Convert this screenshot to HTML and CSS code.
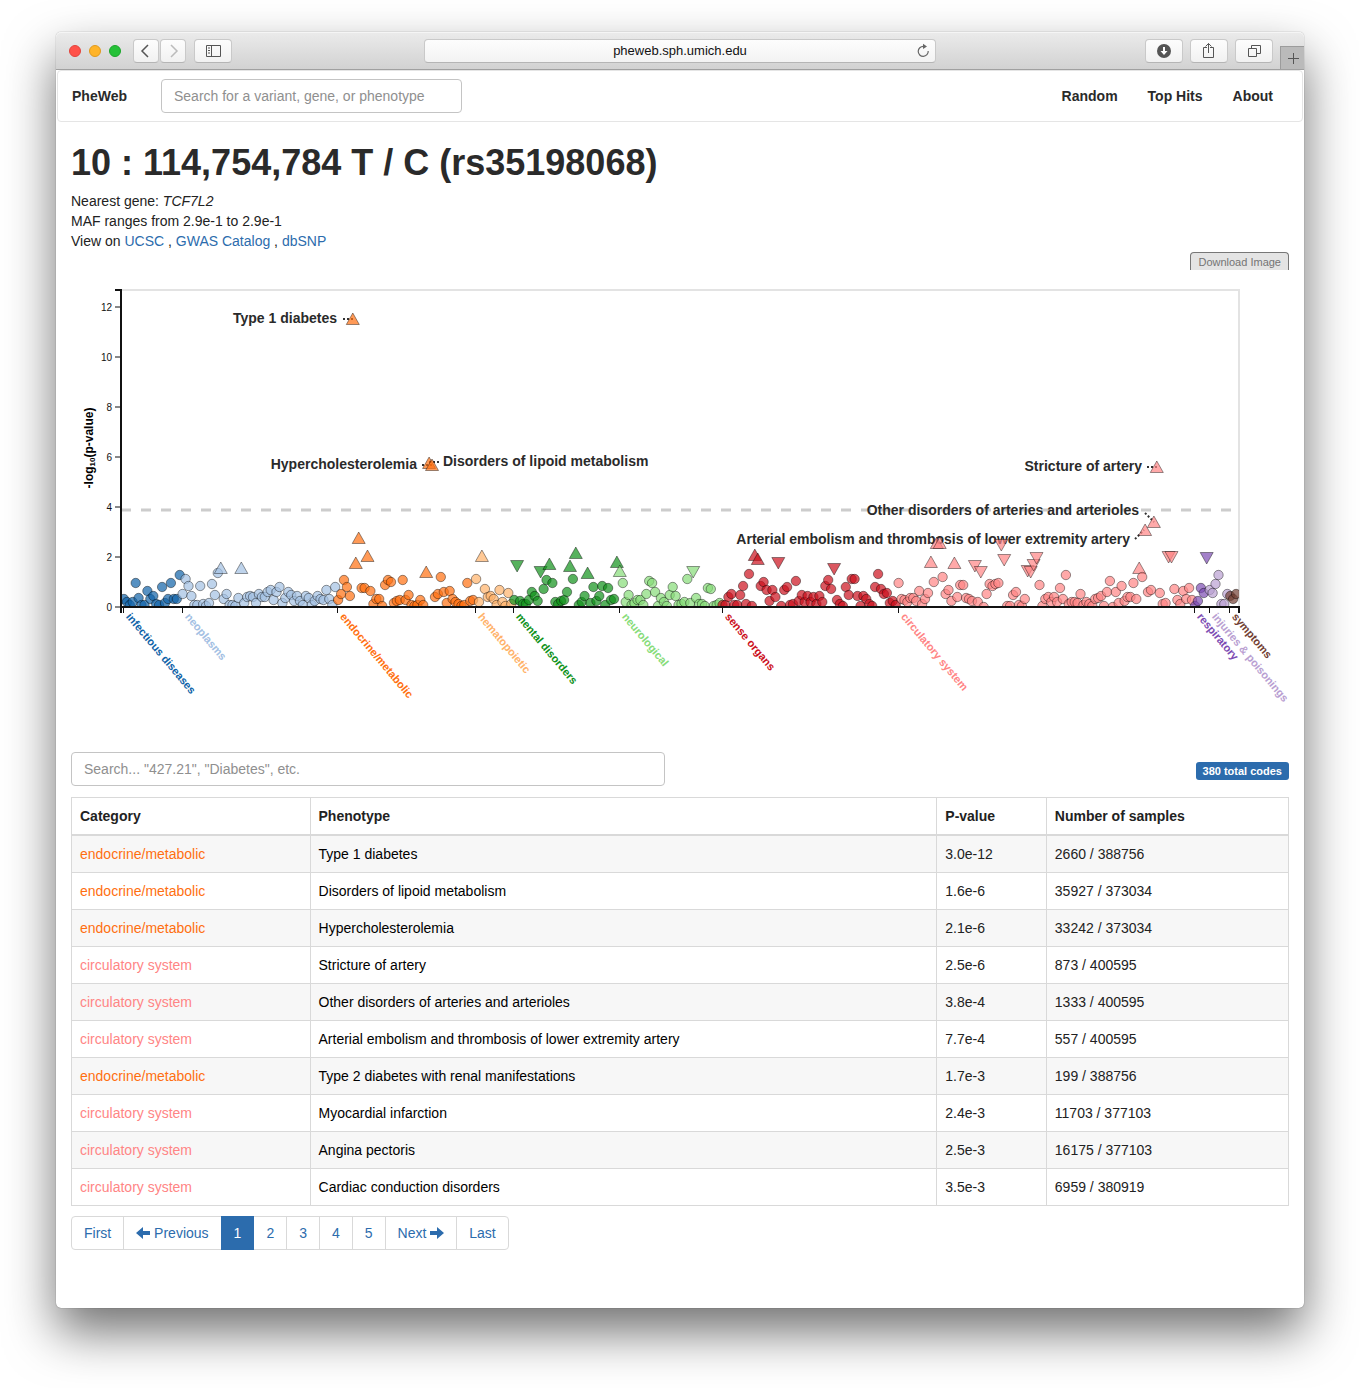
FILE: index.html
```html
<!DOCTYPE html>
<html lang="en">
<head>
<meta charset="utf-8">
<title>PheWeb</title>
<link rel="stylesheet" href="styles.css">
</head>
<body>
<div class="window">
  <header class="toolbar">
    <div class="toolbar-left">
      <div class="lights"><span class="light red"></span><span class="light amber"></span><span class="light green"></span></div>
      <div class="pair">
        <button class="tool small" aria-label="Back"><svg width="24" height="22"><path d="M14 5L8 11l6 6" stroke="#555" stroke-width="1.5"/></svg></button>
        <button class="tool small" aria-label="Forward"><svg width="24" height="22"><path d="M10 5l6 6-6 6" stroke="#bbb" stroke-width="1.5"/></svg></button>
      </div>
      <button class="tool" aria-label="Show sidebar"><svg width="36" height="22"><path d="M11.500 5.500h14v11h-14zM16.500 5.500v11M13 8h2M13 10.500h2M13 13h2" stroke="#555"/></svg></button>
    </div>
    <div class="address">
      <input type="text" aria-label="Address" value="pheweb.sph.umich.edu">
      <button aria-label="Reload"><svg width="14" height="16"><path d="M7.500 3.400A5 5 0 1 0 12.200 8" stroke="#666" stroke-width="1.200"/><path d="M7 .8l4 2.600-4 2.600z" fill="#666"/></svg></button>
    </div>
    <div class="toolbar-right">
      <button class="tool" aria-label="Downloads"><svg width="36" height="22"><circle cx="18" cy="11" r="7" fill="#555"/><path d="M17 7h2v4h2.500L18 15l-3.500-4H17z" fill="#fff"/></svg></button>
      <button class="tool" aria-label="Share"><svg width="36" height="22"><path d="M16 7.500h-3.500v10h10v-10H19M17.500 13V3.500M14.500 6.500l3-3 3 3" stroke="#555"/></svg></button>
      <button class="tool" aria-label="Show all tabs"><svg width="36" height="22"><path d="M12.500 8.500h8v8h-8zM15.500 8V5.500h9v8H21" stroke="#555"/></svg></button>
      <button class="new-tab" aria-label="New tab"><svg width="22" height="22"><path d="M11.500 6v11M6 11.500h11" stroke="#555"/></svg></button>
    </div>
  </header>

  <nav class="navbar">
    <a class="brand" href="#">PheWeb</a>
    <input class="field nav-search" type="text" aria-label="Search" placeholder="Search for a variant, gene, or phenotype">
    <div class="nav-links"><a href="#">Random</a><a href="#">Top Hits</a><a href="#">About</a></div>
  </nav>

  <main class="content">
    <h1>10 : 114,754,784 T / C (rs35198068)</h1>
    <p>Nearest gene: <i>TCF7L2</i></p>
    <p>MAF ranges from 2.9e-1 to 2.9e-1</p>
    <p>View on <a href="#">UCSC</a> , <a href="#">GWAS Catalog</a> , <a href="#">dbSNP</a></p>
    <div class="download-row"><button class="download">Download Image</button></div>

    <svg class="chart" viewBox="0 0 1218 480" role="img" aria-label="p-values by phenotype category">
      <defs><clipPath id="plot-area"><rect width="1118" height="317"/></clipPath></defs>
      <g transform="translate(50 20)">
        <path class="frame" d="M0 0H1118V317"/>
        <path class="threshold" d="M0 220H1118"/>
        <g class="hits">
          <g text-anchor="end">
            <text x="216" y="33">Type 1 diabetes</text>
            <text x="296" y="179">Hypercholesterolemia</text>
            <text x="1021" y="181">Stricture of artery</text>
            <text x="1018" y="225">Other disorders of arteries and arterioles</text>
            <text x="1009" y="254">Arterial embolism and thrombosis of lower extremity artery</text>
          </g>
          <text x="322" y="176">Disorders of lipoid metabolism</text>
          <path d="M222 29h10M301 175h10M308 172h10M1026 177h10M1024 223l9 9M1014 249l9-9"/>
        </g>
        <g id="points" class="points" clip-path="url(#plot-area)"></g>
        <path class="axis" d="M-6 0H0V323M-1 317H1118V323"/>
        <path class="ticks" d="M-6 17H0M-6 67H0M-6 117H0M-6 167H0M-6 217H0M-6 267H0M-6 317H0"/>
        <g class="tick-text" text-anchor="end">
          <text x="-9" y="21">12</text><text x="-9" y="71">10</text><text x="-9" y="121">8</text><text x="-9" y="171">6</text><text x="-9" y="221">4</text><text x="-9" y="271">2</text><text x="-9" y="321">0</text>
        </g>
        <text class="axis-title" text-anchor="middle" transform="translate(-28 158) rotate(-90)">-log<tspan class="sub" dy="2">10</tspan><tspan dy="-2">(p-value)</tspan></text>
        <g id="categories" class="categories"></g>
      </g>
    </svg>

    <div class="filter-row">
      <input class="field filter" type="text" aria-label="Filter phenotypes" placeholder='Search... "427.21", "Diabetes", etc.'>
      <span class="badge">380 total codes</span>
    </div>

    <table>
      <colgroup><col class="c-category"><col class="c-phenotype"><col class="c-pvalue"><col class="c-samples"></colgroup>
      <thead><tr><th>Category</th><th>Phenotype</th><th>P-value</th><th>Number of samples</th></tr></thead>
      <tbody>
        <tr><td class="endocrine">endocrine/metabolic</td><td><a href="#">Type 1 diabetes</a></td><td>3.0e-12</td><td>2660 / 388756</td></tr>
        <tr><td class="endocrine">endocrine/metabolic</td><td><a href="#">Disorders of lipoid metabolism</a></td><td>1.6e-6</td><td>35927 / 373034</td></tr>
        <tr><td class="endocrine">endocrine/metabolic</td><td><a href="#">Hypercholesterolemia</a></td><td>2.1e-6</td><td>33242 / 373034</td></tr>
        <tr><td class="circulatory">circulatory system</td><td><a href="#">Stricture of artery</a></td><td>2.5e-6</td><td>873 / 400595</td></tr>
        <tr><td class="circulatory">circulatory system</td><td><a href="#">Other disorders of arteries and arterioles</a></td><td>3.8e-4</td><td>1333 / 400595</td></tr>
        <tr><td class="circulatory">circulatory system</td><td><a href="#">Arterial embolism and thrombosis of lower extremity artery</a></td><td>7.7e-4</td><td>557 / 400595</td></tr>
        <tr><td class="endocrine">endocrine/metabolic</td><td><a href="#">Type 2 diabetes with renal manifestations</a></td><td>1.7e-3</td><td>199 / 388756</td></tr>
        <tr><td class="circulatory">circulatory system</td><td><a href="#">Myocardial infarction</a></td><td>2.4e-3</td><td>11703 / 377103</td></tr>
        <tr><td class="circulatory">circulatory system</td><td><a href="#">Angina pectoris</a></td><td>2.5e-3</td><td>16175 / 377103</td></tr>
        <tr><td class="circulatory">circulatory system</td><td><a href="#">Cardiac conduction disorders</a></td><td>3.5e-3</td><td>6959 / 380919</td></tr>
      </tbody>
    </table>

    <div class="pagination">
      <button>First</button>
      <button><svg width="14" height="12"><path d="M0 6l7-6v4h7v4H7v4z" fill="currentColor"/></svg> Previous</button>
      <button class="current">1</button>
      <button>2</button>
      <button>3</button>
      <button>4</button>
      <button>5</button>
      <button>Next <svg width="14" height="12"><path d="M14 6L7 0v4H0v4h7v4z" fill="currentColor"/></svg></button>
      <button>Last</button>
    </div>
  </main>
</div>
<script src="chart.js"></script>
</body>
</html>
```
FILE: styles.css
```css
* { box-sizing: border-box; }
body {
  margin: 0;
  background: #fff;
  color: #222;
  font: 14px/20px "Liberation Sans", Arial, sans-serif;
}
button, input { font: inherit; color: inherit; margin: 0; }
button { padding: 0; }
svg { fill: none; }
a { color: #2c6cad; text-decoration: none; }

.window {
  margin: 32px 56px 80px;
  border-radius: 5px;
  background: #fff;
  box-shadow: 0 0 1px rgba(0, 0, 0, .6), 0 24px 50px rgba(0, 0, 0, .56);
}

.toolbar {
  display: grid;
  grid-template-columns: 1fr 41% 1fr;
  align-items: center;
  height: 38px;
  border-bottom: 1px solid #a0a0a0;
  border-radius: 5px 5px 0 0;
  background: linear-gradient(#ebebeb, #d2d2d2);
  box-shadow: inset 0 1px #f5f5f5;
}
.toolbar-left, .toolbar-right, .lights, .pair { display: flex; align-items: center; }
.toolbar-left { gap: 8px; padding-left: 13px; }
.lights { gap: 8px; margin-right: 4px; }
.light { width: 12px; height: 12px; border-radius: 50%; border: 1px solid; }
.red { background: #ff5149; border-color: #e2433c; }
.amber { background: #ffb429; border-color: #e09a1d; }
.green { background: #25c138; border-color: #1ba62b; }
.pair { gap: 1px; }
.tool {
  display: flex;
  width: 38px;
  height: 24px;
  border: 1px solid #c9c9c9;
  border-bottom-color: #b5b5b5;
  border-radius: 4px;
  background: linear-gradient(#fdfdfd, #f1f1f1);
}
.tool.small { width: 26px; }
.address {
  display: flex;
  align-items: center;
  height: 24px;
  padding: 0 5px 0 19px;
  border: 1px solid #c9c9c9;
  border-bottom-color: #b5b5b5;
  border-radius: 4px;
  background: linear-gradient(#fdfdfd, #f3f3f3);
}
.address input {
  flex: 1;
  min-width: 0;
  padding: 0;
  border: 0;
  background: none;
  color: #111;
  font-size: 13px;
  text-align: center;
}
.address button { display: flex; border: 0; background: none; }
.toolbar-right { justify-content: flex-end; gap: 7px; height: 100%; }
.new-tab {
  align-self: flex-end;
  width: 24px;
  height: 23px;
  border: 1px solid #9c9c9c;
  border-width: 1px 0 0 1px;
  background: #bababa;
}

.navbar {
  display: flex;
  align-items: center;
  margin: 0 1px;
  padding: 8px 29px 8px 14px;
  border: 1px solid #e5e5e5;
  border-radius: 4px;
}
.navbar a { color: #2a2a2a; font-weight: bold; }
.brand { margin-right: 34px; }
.nav-links { display: flex; gap: 30px; margin-left: auto; }
.field {
  height: 34px;
  padding: 6px 12px;
  border: 1px solid #c4c4c4;
  border-radius: 4px;
  background: #fff;
}
.field::placeholder { color: #8f8f8f; opacity: 1; }
.nav-search { width: 301px; }

.content { padding: 21px 15px 58px; }
h1 { margin: 0 0 8px; font-size: 36px; line-height: 40px; color: #2a2a2a; }
p { margin: 0; }
.download-row { display: flex; justify-content: flex-end; padding-top: 1px; }
.download {
  height: 18px;
  padding: 0 7px;
  border: 1px solid #777;
  border-bottom: 0;
  border-radius: 4px 4px 0 0;
  background: #e4e4e4;
  color: #747474;
  font-size: 11px;
  line-height: 18px;
}

.chart { display: block; width: 100%; overflow: visible; }
.frame { stroke: #e3e3e3; stroke-width: 2; }
.threshold { stroke: #ccc; stroke-width: 3; stroke-dasharray: 10 10; }
.hits text { fill: #2a2a2a; font-size: 14px; font-weight: bold; }
.hits path { stroke: #333; stroke-width: 2; stroke-dasharray: 2 2; }
.points { fill-opacity: .7; stroke: #000; stroke-opacity: .4; }
.axis { stroke: #111; stroke-width: 2; }
.ticks { stroke: #111; stroke-width: 1; }
.tick-text { fill: #111; font-size: 10px; }
.axis-title { fill: #000; font-size: 12px; font-weight: bold; }
.sub { font-size: 8px; }
.categories { font-size: 11px; font-weight: bold; }
.categories path { stroke: #111; }

.filter-row { display: flex; justify-content: space-between; align-items: center; margin: 2px 0 11px; }
.filter { width: 594px; }
.badge {
  margin-top: 4px;
  padding: 0 7px;
  border-radius: 3px;
  background: #2c6cad;
  color: #fff;
  font-size: 11px;
  font-weight: bold;
  line-height: 18px;
}

table { width: 100%; margin-bottom: 10px; border-collapse: collapse; table-layout: fixed; }
.c-category { width: 19.6%; }
.c-phenotype { width: 51.5%; }
.c-pvalue { width: 9%; }
.c-samples { width: 19.9%; }
th, td { padding: 8px; border: 1px solid #d9d9d9; text-align: left; }
th { border-bottom-width: 2px; }
tbody tr:nth-child(odd) { background: #f7f7f7; }
td a { color: #000; }
.endocrine { color: #ff6f10; }
.circulatory { color: #ff8585; }

.pagination { display: flex; }
.pagination button {
  height: 34px;
  margin-left: -1px;
  padding: 0 12px;
  border: 1px solid #d9d9d9;
  background: #fff;
  color: #2c6cad;
}
.pagination button:first-child { margin-left: 0; border-radius: 4px 0 0 4px; }
.pagination button:last-child { border-radius: 0 4px 4px 0; }
.pagination .current { z-index: 1; border-color: #2c6cad; background: #2c6cad; color: #fff; }
.pagination svg { vertical-align: -1px; }
```
FILE: chart.js
```js
// One entry per phenotype, in code order: height above the axis.
// "^" marks a notable positive effect, "v" a notable negative one.
const categories = [
  ["infectious diseases", "#0f63a8", "8 5 2 5 24 9 2 2 16 8 11 3 2 20 4 8 24 8 8 32"],
  ["neoplasms", "#a3c0e3", "13 28 21 11 2 2 21 3 1 4 23 12 34 ^39 8 13 2 2 1 9 ^39 4 10 11 10 4 13 10 10 15 17 7 15 20 4 9 15 12 6 11 6 2 11 9 2 6 11 8 7 17 8 2 20"],
  ["endocrine/metabolic", "#ff6f10", "7 13 27 20 11 ^288 ^44 ^69 19 19 ^51 16 3 8 8 1 22 27 25 4 6 7 27 7 12 2 1 2 7 2 ^35 ^144 ^142 10 13 30 15 4 16 8 5 3 1 2 24 6 7"],
  ["hematopoietic", "#ffb26a", "28 5 ^51 18 10 11 8 2 17 5 1 14 3"],
  ["mental disorders", "#0f921a", "7 v41 6 3 3 7 15 11 6 v35 18 27 ^43 24 5 3 6 7 15 ^41 28 ^54 2 5 11 ^34 4 20 6 11 21 2 19 7 8 ^45"],
  ["neurological", "#86dc78", "^36 24 5 12 2 4 7 7 2 13 26 24 15 1 9 5 1 12 20 11 2 3 5 28 4 v35 9 3 3 1 19 18 1 2 4"],
  ["sense organs", "#cc0f1c", "2 2 10 13 2 2 12 21 3 33 1 ^52 ^48 21 25 17 6 17 10 v44 1 17 20 2 3 26 6 12 5 11 5 10 3 11 5 21 27 18 v38 7 3 1 20 12 28 28 11 1 11 8 3 1 20 33 18 13 14 4 6 2"],
  ["circulatory system", "#ff8585", "24 8 7 5 9 9 6 16 3 8 14 ^45 25 ^64 ^64 30 13 17 6 ^44 10 22 22 9 8 6 v41 5 v35 0 13 23 21 23 24 v62 v47 1 1 12 15 2 1 8 v36 v35 v42 v49 22 1 8 10 5 10 5 19 8 32 3 5 5 4 13 2 5 3 1 8 9 11 1 15 26 0 15 4 21 6 10 10 24 8 ^39 30 ^77 15 17 ^85 ^140 14 3 4 v50 v50 18 7 3 16 8 19 7"],
  ["respiratory", "#7c4bb2", "1 6 19 14 v49"],
  ["injuries & poisonings", "#b99fd2", "17 14 23 32 3 3 13"],
  ["symptoms", "#723f33", "11 8 13"]
];

const NS = "http://www.w3.org/2000/svg";
const WIDTH = 1118;
const BASE = 317;

function add(parent, tag, attrs, text) {
  const node = document.createElementNS(NS, tag);
  for (const key in attrs) node.setAttribute(key, attrs[key]);
  if (text) node.textContent = text;
  parent.appendChild(node);
}

const points = document.getElementById("points");
const labels = document.getElementById("categories");
const step = WIDTH / 381;
let index = 1;

for (const [name, color, values] of categories) {
  const tick = Math.round(index * step) - 0.5;
  add(labels, "path", { d: `M${tick} ${BASE}v6` });
  add(labels, "text", { fill: color, transform: `translate(${tick + 2} ${BASE + 10}) rotate(50)` }, name);
  for (const value of values.split(" ")) {
    const x = (index * step).toFixed(1);
    const y = BASE - Number(value.replace(/[v^]/, ""));
    if (value[0] === "^") {
      add(points, "path", { fill: color, d: `M${x} ${y - 6}l6.500 11.500h-13z` });
    } else if (value[0] === "v") {
      add(points, "path", { fill: color, d: `M${x} ${y + 6}l6.500 -11.500h-13z` });
    } else {
      add(points, "circle", { fill: color, cx: x, cy: y, r: 4.7 });
    }
    index += 1;
  }
}
```
